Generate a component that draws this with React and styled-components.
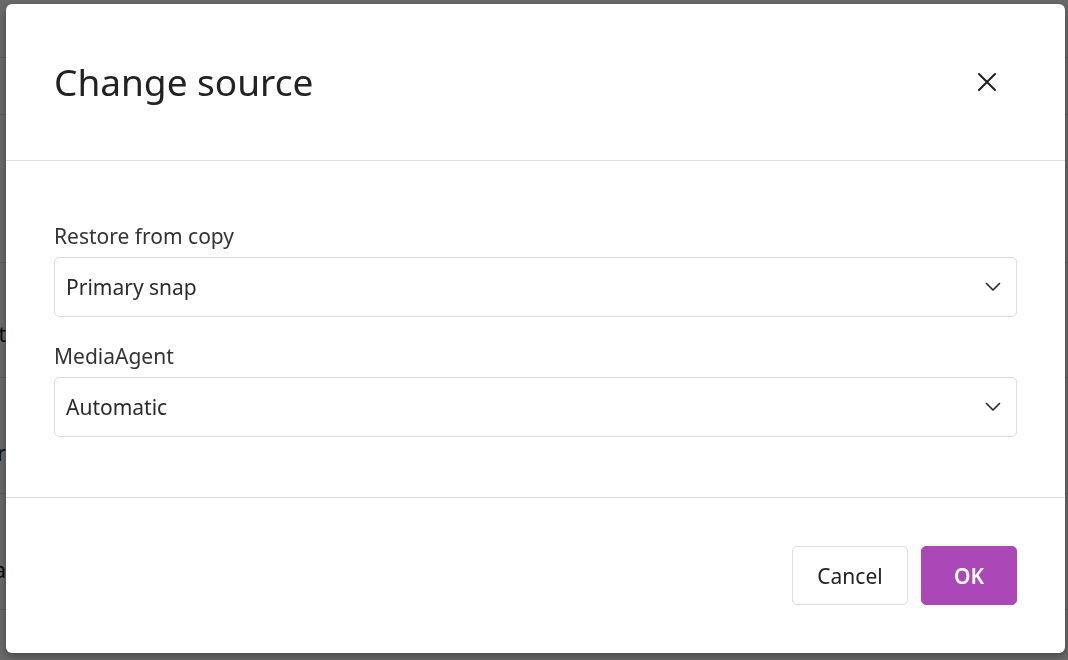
import React from 'react'
import styled, { createGlobalStyle } from 'styled-components'

const GlobalStyle = createGlobalStyle`
  html, body {
    margin: 0;
    padding: 0;
    background: #ffffff;
    font-family: "Noto Sans", "Open Sans", sans-serif;
  }
  * { box-sizing: border-box; }
`

// page that sits behind the dialog
const Page = styled.div`
  width: 1068px;
  height: 660px;
  overflow: hidden;
  background: #fafafa;
`

const PageRow = styled.div`
  height: ${p => p.h}px;
  border-bottom: 1px solid #dcdcdc;
  display: flex;
  align-items: flex-start;
  padding-top: ${p => p.pt || 0}px;
`

const PeekCell = styled.div`
  width: 6px;
  overflow: hidden;
  display: flex;
  justify-content: flex-end;
  font-size: 21px;
  line-height: 28px;
  color: #1a1a2e;
  white-space: nowrap;
`

const Backdrop = styled.div`
  position: fixed;
  inset: 0;
  background: rgba(0, 0, 0, 0.58);
  display: flex;
  align-items: flex-start;
  padding: 4px 3px 0 6px;
`

const Dialog = styled.div`
  width: 1059px;
  height: 649px;
  background: #ffffff;
  border-radius: 6px;
  box-shadow: 0 3px 8px rgba(0, 0, 0, 0.35);
  display: flex;
  flex-direction: column;
`

const Header = styled.div`
  height: 157px;
  padding: 0 48px;
  display: flex;
  align-items: center;
  justify-content: space-between;
  border-bottom: 1px solid #dedede;
`

const Title = styled.h2`
  margin: 0;
  font-size: 37px;
  font-weight: 400;
  line-height: 44px;
  color: #222222;
`

const CloseButton = styled.button`
  width: 40px;
  height: 40px;
  margin-right: 10px;
  border: none;
  background: transparent;
  padding: 0;
  display: flex;
  align-items: center;
  justify-content: center;
  cursor: pointer;
`

const Body = styled.div`
  padding: 61px 48px 60px;
  border-bottom: 1px solid #dedede;
  display: flex;
  flex-direction: column;
  gap: 25px;
`

const Field = styled.div`
  display: flex;
  flex-direction: column;
  gap: 7px;
`

const Label = styled.label`
  font-size: 21px;
  line-height: 28px;
  color: #333333;
`

const Select = styled.div`
  height: 60px;
  border: 1px solid #dddddd;
  border-radius: 5px;
  padding: 0 15px 0 11px;
  display: flex;
  align-items: center;
  justify-content: space-between;
  font-size: 21px;
  color: #2a2a2a;
  background: #ffffff;
`

const Footer = styled.div`
  flex: 1;
  padding: 0 48px;
  display: flex;
  align-items: center;
  justify-content: flex-end;
  gap: 13px;
`

const Button = styled.button`
  height: 59px;
  min-width: ${p => (p.primary ? 96 : 116)}px;
  padding: 0 22px;
  border-radius: 5px;
  border: 1px solid ${p => (p.primary ? '#aa48b7' : '#dddddd')};
  background: ${p => (p.primary ? '#aa48b7' : '#ffffff')};
  color: ${p => (p.primary ? '#ffffff' : '#222222')};
  font-family: inherit;
  font-size: 21px;
  font-weight: ${p => (p.primary ? 600 : 400)};
  cursor: pointer;
`

const Chevron = () => (
  <svg width="16" height="10" viewBox="0 0 16 10" fill="none">
    <path d="M1.5 1.5 L8 8 L14.5 1.5" stroke="#222" strokeWidth="1.6" strokeLinecap="round" strokeLinejoin="round" />
  </svg>
)

const CloseIcon = () => (
  <svg width="20" height="20" viewBox="0 0 20 20" fill="none">
    <path d="M2 2 L18 18 M18 2 L2 18" stroke="#1e1e1e" strokeWidth="2" strokeLinecap="round" />
  </svg>
)

const rows = [
  { h: 58 },
  { h: 57 },
  { h: 148 },
  { h: 115, pt: 57, text: 'Start' },
  { h: 116, pt: 61, text: 'Server' },
  { h: 116, pt: 62, text: 'Data' },
  { h: 60 },
]

export default function App() {
  return (
    <>
      <GlobalStyle />
      <Page>
        {rows.map((r, i) => (
          <PageRow key={`row_${i}`} h={r.h} pt={r.pt}>
            {r.text && <PeekCell>{r.text}</PeekCell>}
          </PageRow>
        ))}
      </Page>
      <Backdrop>
        <Dialog role="dialog">
          <Header>
            <Title>Change source</Title>
            <CloseButton aria-label="Close"><CloseIcon /></CloseButton>
          </Header>
          <Body>
            <Field>
              <Label>Restore from copy</Label>
              <Select>Primary snap<Chevron /></Select>
            </Field>
            <Field>
              <Label>MediaAgent</Label>
              <Select>Automatic<Chevron /></Select>
            </Field>
          </Body>
          <Footer>
            <Button>Cancel</Button>
            <Button primary>OK</Button>
          </Footer>
        </Dialog>
      </Backdrop>
    </>
  )
}
